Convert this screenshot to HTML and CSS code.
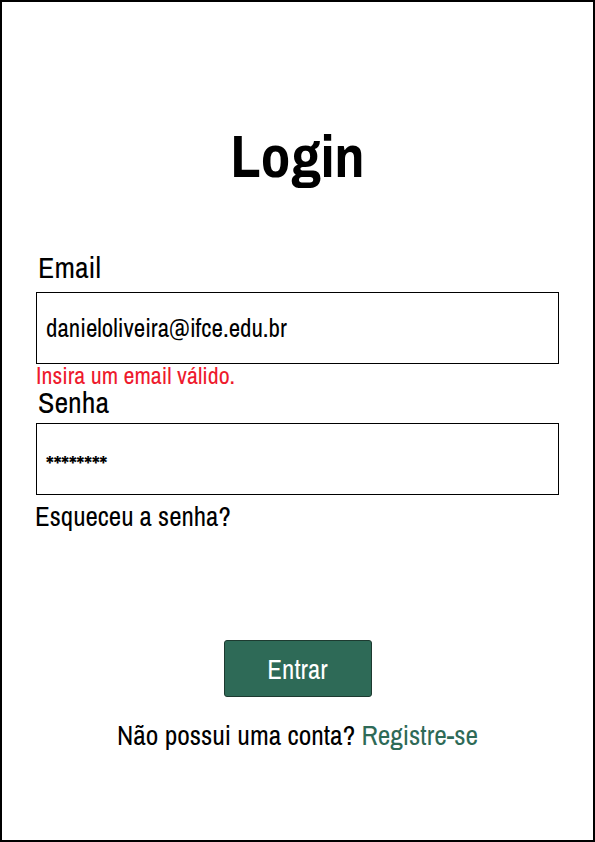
FILE: index.html
```html
<!DOCTYPE html>
<html lang="pt-BR">
<head>
<meta charset="utf-8">
<title>Login</title>
<link rel="stylesheet" href="styles.css">
</head>
<body>
<main class="frame">
  <h1 class="title">Login</h1>
  <form class="form">
    <label class="label">Email</label>
    <div class="field"><span class="value">danieloliveira@ifce.edu.br</span></div>
    <p class="error">Insira um email válido.</p>
    <label class="label label-senha">Senha</label>
    <div class="field field-pass"><span class="value stars">********</span></div>
    <a class="forgot">Esqueceu a senha?</a>
    <div class="actions">
      <button type="button" class="btn">Entrar</button>
    </div>
    <p class="signup">Não possui uma conta? <a class="link">Registre-se</a></p>
  </form>
</main>
</body>
</html>
```

FILE: styles.css
```css
* { box-sizing: border-box; }
html, body { margin: 0; padding: 0; }
body {
  width: 595px;
  height: 842px;
  font-family: "Liberation Sans Narrow", "Archivo Narrow", "Roboto Condensed", "DejaVu Sans Condensed", sans-serif;
  color: #000;
  background: #fff;
}
.frame {
  width: 595px;
  height: 842px;
  border: 2px solid #000;
  display: flex;
  flex-direction: column;
}
.title {
  margin: 119px 0 0;
  text-align: center;
  font-size: 60px;
  font-weight: bold;
  line-height: 70px;
}
.form {
  display: flex;
  flex-direction: column;
  padding: 0 34px;
  margin-top: 59px;
}
.label {
  font-size: 30px;
  line-height: 35px;
  padding-left: 2px;
}
.field {
  margin-top: 7px;
  height: 72px;
  border: 1px solid #000;
  display: flex;
  align-items: center;
  padding-left: 9px;
}
.value { font-size: 25px; }
.stars { font-size: 24px; font-weight: bold; padding-top: 9px; }
.field-pass { margin-top: 4px; }
.error {
  margin: 0;
  color: #ee1a2d;
  font-size: 24px;
  line-height: 22px;
}
.label-senha { line-height: 33px; }
.forgot {
  font-size: 27px;
  line-height: 32px;
  margin-top: 5px;
  margin-left: -1px;
}
.actions {
  display: flex;
  justify-content: center;
  margin-top: 108px;
}
.btn {
  width: 148px;
  height: 57px;
  background: #2e6a57;
  border: 1px solid #1d3a30;
  border-radius: 3px;
  color: #fff;
  font-family: inherit;
  font-size: 27px;
}
.signup {
  text-align: center;
  margin: 23px 0 0;
  font-size: 27.5px;
  line-height: 32px;
}
.link { color: #2e6a57; }
```
